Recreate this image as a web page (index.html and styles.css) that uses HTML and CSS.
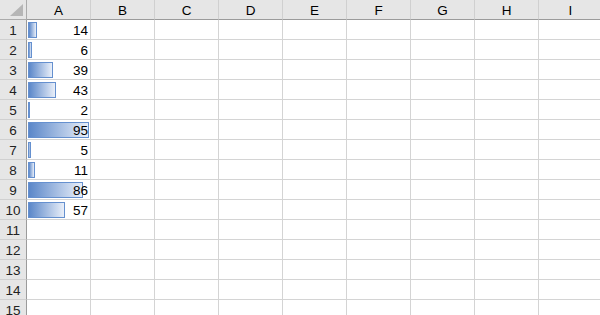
FILE: index.html
```html
<!DOCTYPE html>
<html lang="en">
<head>
  <meta charset="UTF-8" />
  <title>Data Bars</title>
  <link rel="stylesheet" href="styles.css">
</head>
<body>
  <div id="sheet" class="sheet"></div>

  <script>
    // Column A values, shown with data bars
    const values = [14, 6, 39, 43, 2, 95, 5, 11, 86, 57];
    const columns = ['A', 'B', 'C', 'D', 'E', 'F', 'G', 'H', 'I'];
    const rowCount = 15;
    const maxBar = 61; // px width of the largest bar

    const sheet = document.getElementById('sheet');
    let html = '<div class="corner"><span class="corner-mark"></span></div>';
    html += columns.map(c => `<div class="col-head">${c}</div>`).join('');

    for (let r = 1; r <= rowCount; r++) {
      html += `<div class="row-head">${r}</div>`;
      columns.forEach((c, i) => {
        const v = (i === 0) ? values[r - 1] : undefined;
        if (v === undefined) {
          html += '<div class="cell"></div>';
        } else {
          const w = Math.max(1, Math.round(v / 95 * maxBar));
          html += `<div class="cell num"><span class="bar" style="width:${w}px"></span><span class="val">${v}</span></div>`;
        }
      });
    }
    sheet.innerHTML = html;
  </script>
</body>
</html>
```

FILE: styles.css
```css
* {
  margin: 0;
  padding: 0;
  box-sizing: border-box;
}

body {
  background: #ffffff;
  font-family: 'Liberation Sans', Arial, sans-serif;
  font-size: 13.5px;
  color: #000;
  overflow: hidden;
}

.sheet {
  display: grid;
  grid-template-columns: 27px repeat(9, 64px);
  grid-auto-rows: 20px;
}

.corner,
.col-head,
.row-head {
  background: #e6e6e6;
}

.corner {
  position: relative;
  border-right: 1px solid #ababab;
  border-bottom: 1px solid #ababab;
}

.corner-mark {
  position: absolute;
  right: 3px;
  bottom: 3px;
  width: 0;
  height: 0;
  border-left: 13px solid transparent;
  border-bottom: 12px solid #b6b6b6;
}

.col-head {
  border-right: 1px solid #d0d0d0;
  border-bottom: 1px solid #9b9b9b;
  text-align: center;
  line-height: 21px;
}

.row-head {
  border-right: 1px solid #9b9b9b;
  border-bottom: 1px solid #d0d0d0;
  text-align: center;
  line-height: 22px;
  color: #222;
}

.cell {
  border-right: 1px solid #d4d4d4;
  border-bottom: 1px solid #d4d4d4;
}

.num {
  position: relative;
  text-align: right;
  padding-right: 2px;
  line-height: 22px;
}

.bar {
  position: absolute;
  left: 1px;
  top: 2px;
  height: 16px;
  background: linear-gradient(to right, #5b87c9, #e9eff9);
  border: 1px solid #6590cf;
}

.val {
  position: relative;
}
```
